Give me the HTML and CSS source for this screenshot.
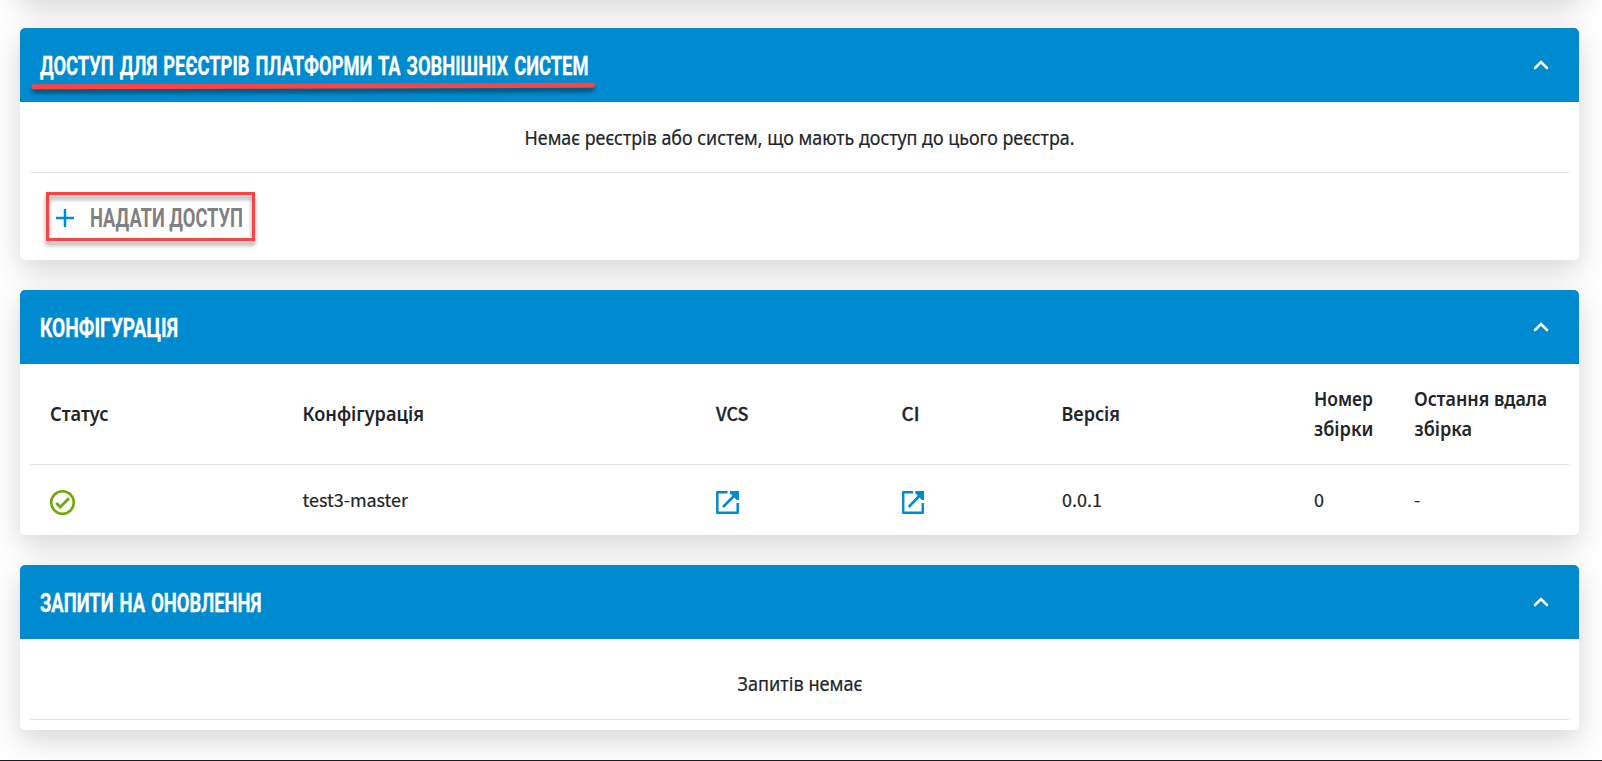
FILE: index.html
```html
<!DOCTYPE html>
<html lang="uk">
<head>
<meta charset="utf-8">
<title>Реєстр</title>
<link rel="stylesheet" href="styles.css">
</head>
<body>
<svg class="defs" width="0" height="0" aria-hidden="true">
  <symbol id="chevron" viewBox="0 0 16 10"><path d="M2 8l6-6 6 6" fill="none" stroke="#fff" stroke-width="2.5" stroke-linecap="round"/></symbol>
  <symbol id="open" viewBox="0 0 23 23"><path d="M11.5 1.3H1.3v20.4h20.4V12" fill="none" stroke="#008bd0" stroke-width="2.5" stroke-linejoin="round"/><path d="M7 16L20 3" fill="none" stroke="#008bd0" stroke-width="2.6"/><path d="M14 0h9v9h-2.3l-6.7-6.7z" fill="#008bd0"/></symbol>
</svg>
<main class="page">
  <section class="card card-previous"></section>

  <section class="card">
    <header class="card-header">
      <h2 class="title"><svg width="549" height="74"><text x="0" y="47" textLength="548.500" lengthAdjust="spacingAndGlyphs">ДОСТУП ДЛЯ РЕЄСТРІВ ПЛАТФОРМИ ТА ЗОВНІШНІХ СИСТЕМ</text></svg>
        <svg class="underline" width="576" height="20"><path d="M5 7.8L563.500 6.200" /></svg>
      </h2>
      <svg class="chevron"><use href="#chevron"/></svg>
    </header>
    <div class="message message-access"><svg width="550" height="30"><text x="-0.500" y="22.500" textLength="550" lengthAdjust="spacingAndGlyphs">Немає реєстрів або систем, що мають доступ до цього реєстра.</text></svg></div>
    <div class="actions">
      <button class="grant">
        <svg class="plus" width="18" height="18"><path d="M9 0v18M0 9h18"/></svg>
        <svg class="grant-label" width="154" height="43"><text x="0" y="29.500" textLength="153" lengthAdjust="spacingAndGlyphs">НАДАТИ ДОСТУП</text></svg>
      </button>
    </div>
  </section>

  <section class="card">
    <header class="card-header">
      <h2 class="title"><svg width="139" height="74"><text x="0" y="47" textLength="138" lengthAdjust="spacingAndGlyphs">КОНФІГУРАЦІЯ</text></svg></h2>
      <svg class="chevron"><use href="#chevron"/></svg>
    </header>
    <div class="table">
      <div class="row row-head">
        <div><svg width="60" height="30"><text x="0" y="22" textLength="58.500" lengthAdjust="spacingAndGlyphs">Статус</text></svg></div>
        <div><svg width="123" height="30"><text x="-0.500" y="22" textLength="121.500" lengthAdjust="spacingAndGlyphs">Конфігурація</text></svg></div>
        <div><svg width="33" height="30"><text class="latin" x="0" y="22" textLength="32.500" lengthAdjust="spacingAndGlyphs">VCS</text></svg></div>
        <div><svg width="18" height="30"><text class="latin" x="-0.500" y="22" textLength="18" lengthAdjust="spacingAndGlyphs">CI</text></svg></div>
        <div><svg width="60" height="30"><text x="-0.500" y="22" textLength="58.500" lengthAdjust="spacingAndGlyphs">Версія</text></svg></div>
        <div><svg width="60" height="60"><text x="0" y="22" textLength="59" lengthAdjust="spacingAndGlyphs">Номер</text><text x="0" y="52" textLength="59.500" lengthAdjust="spacingAndGlyphs">збірки</text></svg></div>
        <div><svg width="134" height="60"><text x="0" y="22" textLength="133" lengthAdjust="spacingAndGlyphs">Остання вдала</text><text x="0.500" y="52" textLength="57.500" lengthAdjust="spacingAndGlyphs">збірка</text></svg></div>
      </div>
      <div class="row row-body">
        <div><svg class="icon" width="25" height="25"><circle cx="12.500" cy="12.500" r="11.300" fill="none" stroke="#73a70a" stroke-width="2.600"/><path d="M6.200 13l4 4 8.800-8.800" fill="none" stroke="#73a70a" stroke-width="2.800"/></svg></div>
        <div><svg width="107" height="30"><text class="latin" x="-0.500" y="22" textLength="105.500" lengthAdjust="spacingAndGlyphs">test3-master</text></svg></div>
        <div><svg class="icon" width="23" height="23"><use href="#open"/></svg></div>
        <div><svg class="icon" width="22" height="23" viewBox="0 0 23 23" preserveAspectRatio="none"><use href="#open" width="23" height="23"/></svg></div>
        <div><svg width="41" height="30"><text class="latin" x="0" y="22" textLength="40" lengthAdjust="spacingAndGlyphs">0.0.1</text></svg></div>
        <div><svg width="12" height="30"><text class="latin" x="0" y="22">0</text></svg></div>
        <div><svg width="12" height="30"><text class="latin" x="0" y="22">-</text></svg></div>
      </div>
    </div>
  </section>

  <section class="card">
    <header class="card-header">
      <h2 class="title"><svg width="223" height="74"><text x="0" y="47" textLength="221.500" lengthAdjust="spacingAndGlyphs">ЗАПИТИ НА ОНОВЛЕННЯ</text></svg></h2>
      <svg class="chevron"><use href="#chevron"/></svg>
    </header>
    <div class="message message-requests"><svg width="125" height="30"><text x="0.500" y="22" textLength="125" lengthAdjust="spacingAndGlyphs">Запитів немає</text></svg></div>
  </section>
</main>
</body>
</html>
```
FILE: styles.css
```css
* { box-sizing: border-box; }
body { margin: 0; background: #fff; }
svg { display: block; overflow: visible; }
.defs { position: absolute; }
.page {
  height: 761px;
  overflow: hidden;
  padding: 0 23px 0 20px;
  display: flex;
  flex-direction: column;
  gap: 30px;
  border-bottom: 1px solid #1c1a1e;
  font-family: "Noto Sans", "Open Sans", sans-serif;
  font-size: 19px;
  color: #212529;
}
.page text { fill: #212529; }
.card {
  flex: none;
  border-radius: 5px;
  background: #fff;
  box-shadow: 0 10px 30px rgba(0, 0, 0, .17);
}
.card-previous { height: 40px; margin-top: -42px; }
.card-header {
  height: 74px;
  padding: 0 30.5px 0 20px;
  display: flex;
  align-items: center;
  justify-content: space-between;
  background: #008bd0;
  border-radius: 5px 5px 0 0;
}
.title {
  position: relative;
  margin: 0;
  font: 700 26px Roboto, sans-serif;
  word-spacing: 2px;
}
.page .title text { fill: #fff; stroke: #fff; stroke-width: .3; }
.underline { position: absolute; left: -11px; top: 51px; }
.underline path {
  fill: none;
  stroke: #ff4242;
  stroke-width: 5;
  stroke-linecap: round;
  filter: drop-shadow(0 4px 2px rgba(0, 0, 0, .45));
}
.chevron { width: 16px; height: 10px; margin-top: -1px; }
.message {
  margin: 0 10px;
  display: flex;
  justify-content: center;
  border-bottom: 1px solid #dee0e6;
}
.message text, .row-body text { stroke: #212529; stroke-width: .2; }
.message-access { height: 71px; padding-top: 20px; }
.message-requests { height: 81px; padding-top: 30px; margin-bottom: 10px; }
.actions { padding: 19px 26px; height: 87px; }
.grant {
  position: relative;
  width: 209px;
  height: 49px;
  padding: 3px 0 0 10px;
  display: flex;
  align-items: center;
  gap: 16px;
  border: 0;
  background: transparent;
  font: 700 25.5px Roboto, sans-serif;
}
.grant::before {
  content: "";
  position: absolute;
  inset: 0;
  border: 3px solid #ff4242;
  filter: drop-shadow(0 4px 2px rgba(0, 0, 0, .4));
}
.page .grant text { fill: #808080; }
.plus path { fill: none; stroke: #008bd0; stroke-width: 2.5; }
.table { padding: 0 10px; }
.row {
  display: grid;
  grid-template-columns: 253px 413px 186px 160px 252px 100px 1fr;
  align-items: center;
}
.row > div { padding-left: 20px; }
.row-head { height: 101px; border-bottom: 1px solid #dee0e6; font-weight: 600; }
.row-body { height: 70px; }
.row-body .icon { margin-top: 5px; }
.latin { font-family: "Noto Sans CJK SC", sans-serif; font-size: 18px; }
.row-head .latin { font-weight: 500; stroke: #212529; stroke-width: .3; }
```
